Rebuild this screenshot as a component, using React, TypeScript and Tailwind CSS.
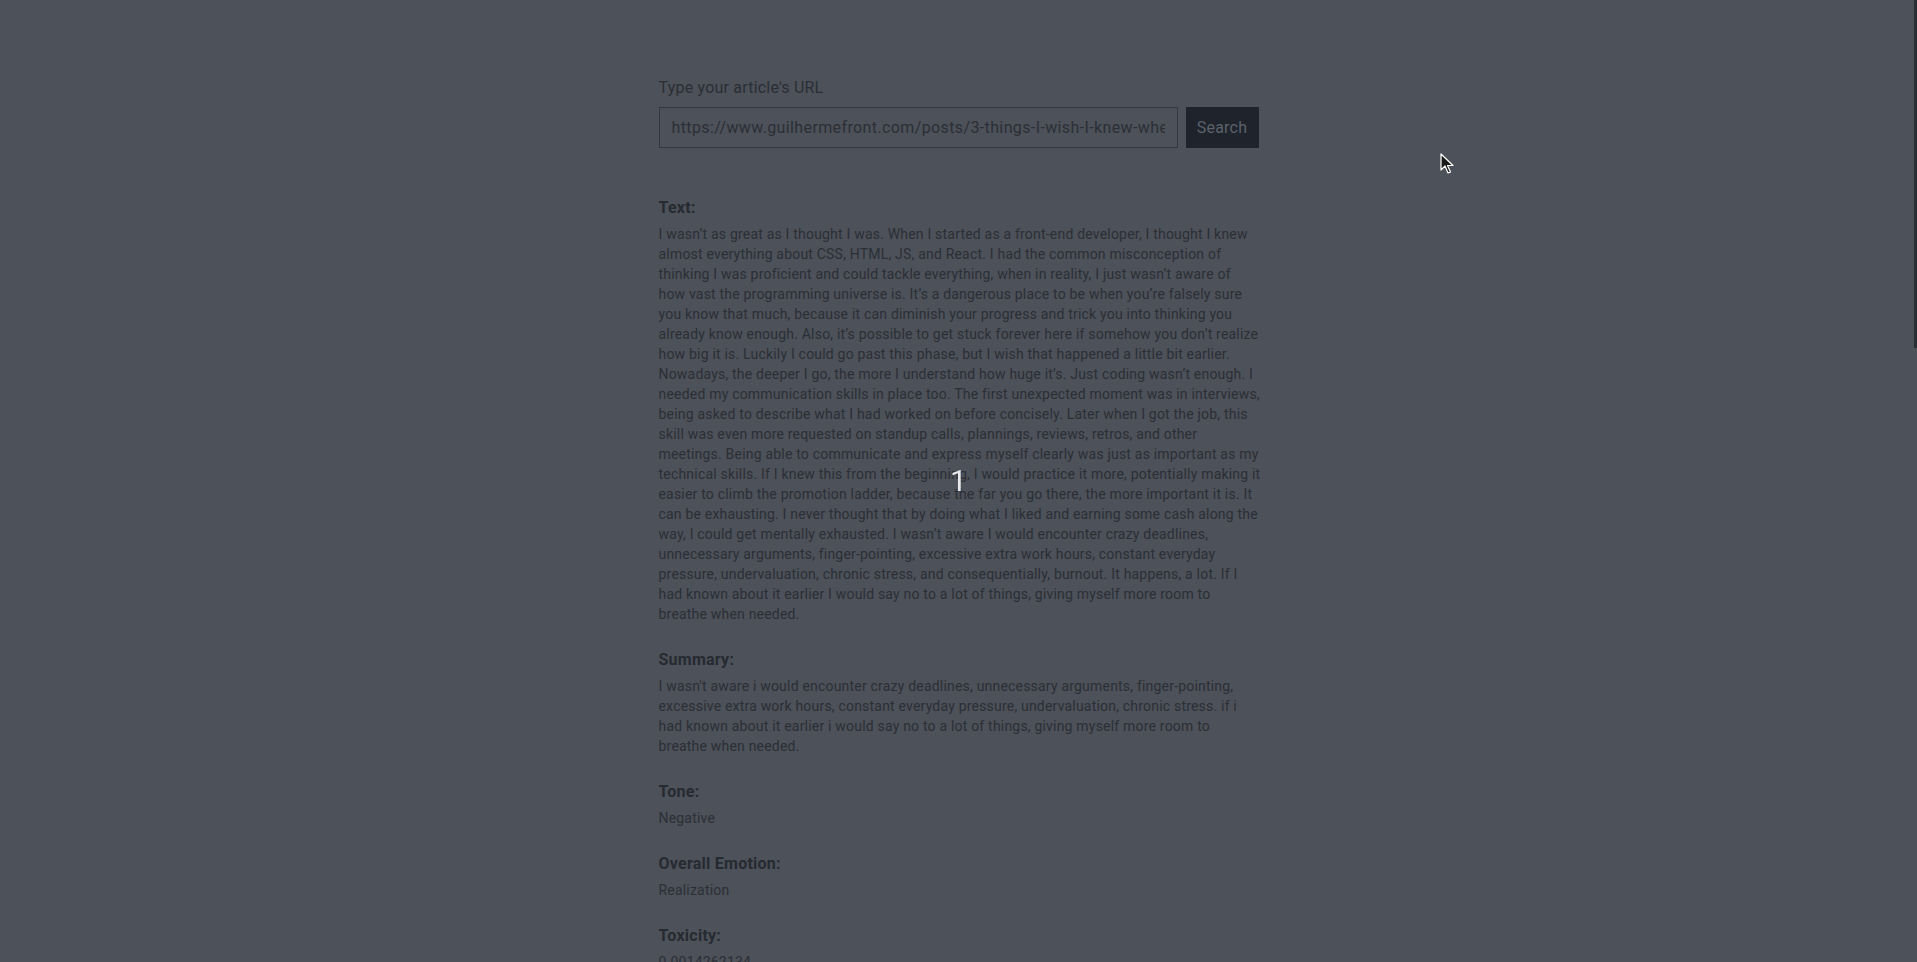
import { useState } from "react"

const articleText =
  "I wasn’t as great as I thought I was. When I started as a front-end developer, I thought I knew almost everything about CSS, HTML, JS, and React. I had the common misconception of thinking I was proficient and could tackle everything, when in reality, I just wasn’t aware of how vast the programming universe is. It’s a dangerous place to be when you’re falsely sure you know that much, because it can diminish your progress and trick you into thinking you already know enough. Also, it’s possible to get stuck forever here if somehow you don’t realize how big it is. Luckily I could go past this phase, but I wish that happened a little bit earlier. Nowadays, the deeper I go, the more I understand how huge it’s. Just coding wasn’t enough. I needed my communication skills in place too. The first unexpected moment was in interviews, being asked to describe what I had worked on before concisely. Later when I got the job, this skill was even more requested on standup calls, plannings, reviews, retros, and other meetings. Being able to communicate and express myself clearly was just as important as my technical skills. If I knew this from the beginning, I would practice it more, potentially making it easier to climb the promotion ladder, because the far you go there, the more important it is. It can be exhausting. I never thought that by doing what I liked and earning some cash along the way, I could get mentally exhausted. I wasn’t aware I would encounter crazy deadlines, unnecessary arguments, finger-pointing, excessive extra work hours, constant everyday pressure, undervaluation, chronic stress, and consequentially, burnout. It happens, a lot. If I had known about it earlier I would say no to a lot of things, giving myself more room to breathe when needed."

const results = [
  { label: "Text:", value: articleText },
  {
    label: "Summary:",
    value:
      "I wasn't aware i would encounter crazy deadlines, unnecessary arguments, finger-pointing, excessive extra work hours, constant everyday pressure, undervaluation, chronic stress. if i had known about it earlier i would say no to a lot of things, giving myself more room to breathe when needed.",
  },
  { label: "Tone:", value: "Negative" },
  { label: "Overall Emotion:", value: "Realization" },
  { label: "Toxicity:", value: "0.0014262134" },
]

export default function App() {
  const [url, setUrl] = useState(
    "https://www.guilhermefront.com/posts/3-things-I-wish-I-knew-when-I-started-programming"
  )

  return (
    <div
      className="relative h-screen overflow-hidden bg-[#4d5159]"
      style={{ fontFamily: "Roboto, 'Open Sans', sans-serif" }}
    >
      {/* Page */}
      <main className="mx-auto w-[600px] pt-[76px]">
        <label className="mb-[7px] block text-base leading-6 tracking-[0.2px] text-[#2a2e35]">
          Type your article's URL
        </label>
        <div className="flex gap-2">
          <input
            value={url}
            onChange={(e) => setUrl(e.target.value)}
            className="h-[41px] flex-1 border border-[#33373e] bg-transparent px-3 text-base tracking-[0.38px] text-[#2b2f36] outline-none"
          />
          <button className="h-[41px] w-[73px] bg-[#1f232b] text-base tracking-[0.2px] text-[#5c616b]">Search</button>
        </div>

        <div className="mt-12 flex w-[602.25px] flex-col gap-6">
          {results.map((r) => (
            <section key={r.label}>
              <h3 className="text-base font-bold leading-6 tracking-[0.25px] text-[#262a31]">{r.label}</h3>
              <p className="mt-1 text-sm leading-5 tracking-[0.2px] text-[#2b2f36]">{r.value}</p>
            </section>
          ))}
        </div>
      </main>

      {/* Loading overlay */}
      <div className="fixed inset-0 flex items-center justify-center">
        <span className="text-3xl text-[#e8e9ec]">1</span>
      </div>

      {/* Scrollbar thumb */}
      <div className="absolute right-0 top-0 h-[348px] w-[3px] bg-[#2a2d33]" />

      {/* Mouse pointer */}
      <svg className="absolute left-[1440px] top-[153px]" width="14" height="21" viewBox="0 0 14 21">
        <path d="M1 1 L1 17 L5 13 L8 20 L10.5 19 L7.5 12.5 L13 12.5 Z" fill="#1a1a1a" stroke="#ffffff" strokeWidth="1.2" strokeLinejoin="round" />
      </svg>
    </div>
  )
}
